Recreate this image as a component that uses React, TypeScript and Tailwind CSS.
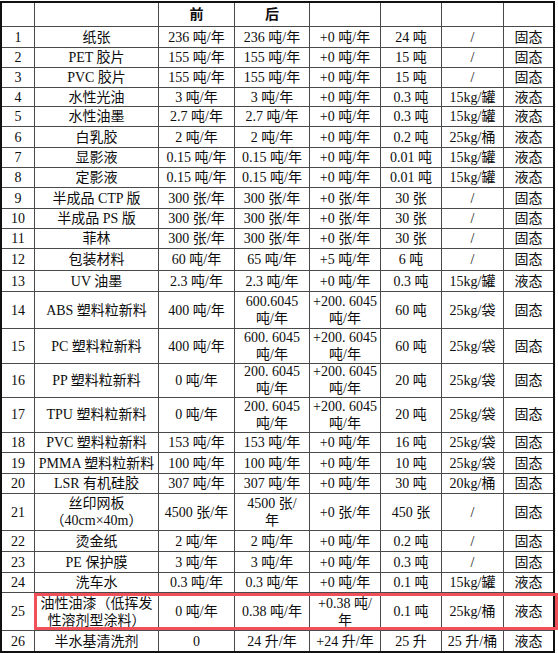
import React from 'react'

type Row = {
  no: string
  name: React.ReactNode
  before: React.ReactNode
  after: React.ReactNode
  diff: React.ReactNode
  stock: string
  pack: string
  state: string
  h: string
}

const rows: Row[] = [
  { no: '1', name: '纸张', before: '236 吨/年', after: '236 吨/年', diff: '+0 吨/年', stock: '24 吨', pack: '/', state: '固态', h: 'h-[21px]' },
  { no: '2', name: 'PET 胶片', before: '155 吨/年', after: '155 吨/年', diff: '+0 吨/年', stock: '15 吨', pack: '/', state: '固态', h: 'h-[20px]' },
  { no: '3', name: 'PVC 胶片', before: '155 吨/年', after: '155 吨/年', diff: '+0 吨/年', stock: '15 吨', pack: '/', state: '固态', h: 'h-[20px]' },
  { no: '4', name: '水性光油', before: '3 吨/年', after: '3 吨/年', diff: '+0 吨/年', stock: '0.3 吨', pack: '15kg/罐', state: '液态', h: 'h-[19px]' },
  { no: '5', name: '水性油墨', before: '2.7 吨/年', after: '2.7 吨/年', diff: '+0 吨/年', stock: '0.3 吨', pack: '15kg/罐', state: '液态', h: 'h-[20px]' },
  { no: '6', name: '白乳胶', before: '2 吨/年', after: '2 吨/年', diff: '+0 吨/年', stock: '0.2 吨', pack: '25kg/桶', state: '液态', h: 'h-[21px]' },
  { no: '7', name: '显影液', before: '0.15 吨/年', after: '0.15 吨/年', diff: '+0 吨/年', stock: '0.01 吨', pack: '15kg/罐', state: '液态', h: 'h-[20px]' },
  { no: '8', name: '定影液', before: '0.15 吨/年', after: '0.15 吨/年', diff: '+0 吨/年', stock: '0.01 吨', pack: '15kg/罐', state: '液态', h: 'h-[20px]' },
  { no: '9', name: '半成品 CTP 版', before: '300 张/年', after: '300 张/年', diff: '+0 张/年', stock: '30 张', pack: '/', state: '固态', h: 'h-[21px]' },
  { no: '10', name: '半成品 PS 版', before: '300 张/年', after: '300 张/年', diff: '+0 张/年', stock: '30 张', pack: '/', state: '固态', h: 'h-[20px]' },
  { no: '11', name: '菲林', before: '300 张/年', after: '300 张/年', diff: '+0 张/年', stock: '30 张', pack: '/', state: '固态', h: 'h-[20px]' },
  { no: '12', name: '包装材料', before: '60 吨/年', after: '65 吨/年', diff: '+5 吨/年', stock: '6 吨', pack: '/', state: '固态', h: 'h-[22px]' },
  { no: '13', name: 'UV 油墨', before: '2.3 吨/年', after: '2.3 吨/年', diff: '+0 吨/年', stock: '0.3 吨', pack: '15kg/罐', state: '液态', h: 'h-[21px]' },
  { no: '14', name: 'ABS 塑料粒新料', before: '400 吨/年', after: <>600.6045<br />吨/年</>, diff: <>+200. 6045<br />吨/年</>, stock: '60 吨', pack: '25kg/袋', state: '固态', h: 'h-[37px]' },
  { no: '15', name: 'PC 塑料粒新料', before: '400 吨/年', after: <>600. 6045<br />吨/年</>, diff: <>+200. 6045<br />吨/年</>, stock: '60 吨', pack: '25kg/袋', state: '固态', h: 'h-[34px]' },
  { no: '16', name: 'PP 塑料粒新料', before: '0 吨/年', after: <>200. 6045<br />吨/年</>, diff: <>+200. 6045<br />吨/年</>, stock: '20 吨', pack: '25kg/袋', state: '固态', h: 'h-[34px]' },
  { no: '17', name: 'TPU 塑料粒新料', before: '0 吨/年', after: <>200. 6045<br />吨/年</>, diff: <>+200. 6045<br />吨/年</>, stock: '20 吨', pack: '25kg/袋', state: '固态', h: 'h-[36px]' },
  { no: '18', name: 'PVC 塑料粒新料', before: '153 吨/年', after: '153 吨/年', diff: '+0 吨/年', stock: '16 吨', pack: '25kg/袋', state: '固态', h: 'h-[20px]' },
  { no: '19', name: 'PMMA 塑料粒新料', before: '100 吨/年', after: '100 吨/年', diff: '+0 吨/年', stock: '10 吨', pack: '25kg/袋', state: '固态', h: 'h-[21px]' },
  { no: '20', name: 'LSR 有机硅胶', before: '307 吨/年', after: '307 吨/年', diff: '+0 吨/年', stock: '30 吨', pack: '20kg/桶', state: '固态', h: 'h-[20px]' },
  { no: '21', name: <>丝印网板<br />（40cm×40m）</>, before: '4500 张/年', after: <>4500 张/<br />年</>, diff: '+0 张/年', stock: '450 张', pack: '/', state: '固态', h: 'h-[37px]' },
  { no: '22', name: '烫金纸', before: '2 吨/年', after: '2 吨/年', diff: '+0 吨/年', stock: '0.2 吨', pack: '/', state: '固态', h: 'h-[21px]' },
  { no: '23', name: 'PE 保护膜', before: '3 吨/年', after: '3 吨/年', diff: '+0 吨/年', stock: '0.3 吨', pack: '/', state: '固态', h: 'h-[21px]' },
  { no: '24', name: '洗车水', before: '0.3 吨/年', after: '0.3 吨/年', diff: '+0 吨/年', stock: '0.1 吨', pack: '15kg/罐', state: '液态', h: 'h-[20px]' },
  { no: '25', name: <>油性油漆（低挥发<br />性溶剂型涂料）</>, before: '0 吨/年', after: '0.38 吨/年', diff: <>+0.38 吨/<br />年</>, stock: '0.1 吨', pack: '25kg/桶', state: '液态', h: 'h-[38px]' },
  { no: '26', name: '半水基清洗剂', before: '0', after: '24 升/年', diff: '+24 升/年', stock: '25 升', pack: '25 升/桶', state: '液态', h: 'h-[20px]' },
]

const cols = 'grid grid-cols-[33px_124px_76px_75px_71px_61px_62px_49px]'
const cell = 'flex items-center justify-center text-center whitespace-nowrap border-r border-b border-[#4a4a4a] leading-[17px]'
const lastCell = 'flex items-center justify-center text-center whitespace-nowrap border-b border-[#4a4a4a] leading-[17px]'

export default function App() {
  return (
    <div
      className="relative w-[558px] h-[653px] bg-white text-[#0d0d0d] text-[14px] overflow-hidden"
      style={{ fontFamily: '"Liberation Serif", "Noto Sans CJK SC", serif' }}
    >
      <div className="mt-[1px] w-[555px] border-2 border-[#111]">
        <div className={`${cols} h-[24px] font-bold`}>
          <div className={cell} />
          <div className={cell} />
          <div className={cell}>前</div>
          <div className={cell}>后</div>
          <div className={cell} />
          <div className={cell} />
          <div className={cell} />
          <div className={lastCell} />
        </div>
        {rows.map((r, i) => {
          const b = i === rows.length - 1 ? ' border-b-0' : ''
          return (
            <div key={r.no} className={`${cols} ${r.h}`}>
              <div className={cell + b}>{r.no}</div>
              <div className={cell + b}>{r.name}</div>
              <div className={cell + b}>{r.before}</div>
              <div className={cell + b}>{r.after}</div>
              <div className={cell + b}>{r.diff}</div>
              <div className={cell + b}>{r.stock}</div>
              <div className={cell + b}>{r.pack}</div>
              <div className={lastCell + b}>{r.state}</div>
            </div>
          )
        })}
      </div>
      <div className="absolute left-[34px] top-[593px] w-[524px] h-[37px] border-[3px] border-[#f0505a] pointer-events-none" />
    </div>
  )
}
